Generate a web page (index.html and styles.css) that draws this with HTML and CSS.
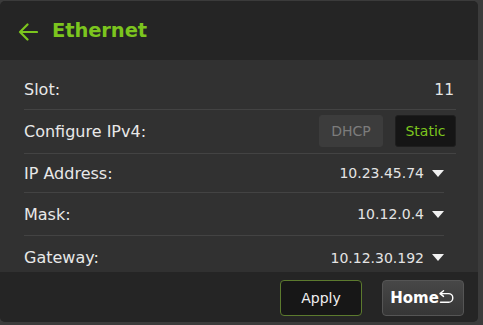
FILE: index.html
```html
<!DOCTYPE html>
<html>
<head>
<meta charset="utf-8">
<link rel="stylesheet" href="styles.css">
</head>
<body>
<div class="panel">
  <header class="header">
    <svg class="back" width="20" height="18" viewBox="0 0 20 18"><path d="M2 9 H19 M9.5 1.5 L2 9 L9.5 16.5" fill="none" stroke="#7cc51e" stroke-width="2.2" stroke-linecap="round" stroke-linejoin="round"/></svg>
    <h1 class="title">Ethernet</h1>
  </header>
  <main class="content">
    <div class="row row-slot wide">
      <span class="label">Slot:</span>
      <span class="value slot-value">11</span>
    </div>
    <div class="row row-config wide">
      <span class="label">Configure IPv4:</span>
      <div class="toggle">
        <button class="opt opt-off">DHCP</button>
        <button class="opt opt-on">Static</button>
      </div>
    </div>
    <div class="row row-ip narrow">
      <span class="label">IP Address:</span>
      <span class="value">10.23.45.74<span class="caret"></span></span>
    </div>
    <div class="row row-mask narrow">
      <span class="label">Mask:</span>
      <span class="value">10.12.0.4<span class="caret"></span></span>
    </div>
    <div class="row row-gw narrow">
      <span class="label">Gateway:</span>
      <span class="value">10.12.30.192<span class="caret"></span></span>
    </div>
  </main>
  <footer class="footer">
    <button class="btn btn-apply">Apply</button>
    <button class="btn btn-home">Home<svg class="home-icon" width="15" height="14" viewBox="0 0 15 14"><path d="M4.5 0.8 L1 3.6 L4.5 6.4 M1 3.6 H9.5 A4.3 4.3 0 0 1 9.5 12.2 H1.5" fill="none" stroke="#ffffff" stroke-width="1.4" stroke-linecap="round" stroke-linejoin="round"/></svg></button>
  </footer>
</div>
</body>
</html>
```
FILE: styles.css
```css
* { box-sizing: border-box; }
html, body {
  margin: 0;
  padding: 0;
  background: #3b3b3b;
  width: 483px;
  height: 325px;
  overflow: hidden;
  font-family: "DejaVu Sans", Verdana, sans-serif;
}
.panel {
  width: 478px;
  height: 321px;
  margin-top: 1px;
  border-radius: 5px;
  overflow: hidden;
  display: flex;
  flex-direction: column;
  background: #313131;
}
.header {
  height: 59px;
  flex: none;
  background: #252525;
  display: flex;
  align-items: center;
  padding-left: 18px;
  gap: 14px;
}
.back { display: block; margin-top: 2px; }
.title {
  margin: 0;
  font-size: 19.5px;
  font-weight: bold;
  color: #7cc51e;
  letter-spacing: -0.1px;
}
.content {
  flex: 1;
  overflow: hidden;
  padding-top: 10px;
}
.row {
  display: flex;
  align-items: center;
  justify-content: space-between;
  margin-left: 24px;
  border-bottom: 1px solid #434343;
}
.wide { margin-right: 22px; }
.narrow { margin-right: 34px; }
.row-slot { height: 40px; }
.row-config { height: 44px; }
.row-ip { height: 39px; }
.row-mask { height: 43px; }
.row-gw { height: 43px; border-bottom: none; }
.label {
  font-size: 16px;
  color: #e8e8e8;
}
.value {
  font-size: 14px;
  color: #e4e4e4;
  display: flex;
  align-items: center;
}
.slot-value { font-size: 15.5px; margin-right: 2px; }
.caret {
  width: 0;
  height: 0;
  margin-left: 8px;
  border-left: 6.5px solid transparent;
  border-right: 6.5px solid transparent;
  border-top: 7px solid #f2f2f2;
}
.toggle {
  display: flex;
  gap: 12px;
  margin-top: -1px;
}
.opt {
  height: 32px;
  border-radius: 3px;
  font-family: inherit;
  font-size: 14px;
  padding: 0;
}
.opt-off {
  width: 64px;
  background: #3c3c3c;
  border: 1px solid #3c3c3c;
  color: #7c7c7c;
}
.opt-on {
  width: 61px;
  background: #151515;
  border: 1px solid #1e1e1e;
  color: #7cc51e;
}
.footer {
  height: 50px;
  flex: none;
  background: #252525;
  display: flex;
  justify-content: flex-end;
  align-items: flex-start;
  padding: 8px 14px 0 0;
  gap: 20px;
}
.btn {
  height: 36px;
  border-radius: 4px;
  font-family: inherit;
  padding: 0;
  display: flex;
  align-items: center;
  justify-content: center;
}
.btn-apply {
  width: 82px;
  background: #171717;
  border: 1px solid #5c7a2e;
  color: #f0f0f0;
  font-size: 14px;
}
.btn-home {
  width: 82px;
  background: linear-gradient(#474747, #363636);
  border: 1px solid #555555;
  color: #ffffff;
  font-size: 15px;
  font-weight: bold;
  padding-right: 2px;
}
.home-icon { display: block; margin-top: -3px; }
```
